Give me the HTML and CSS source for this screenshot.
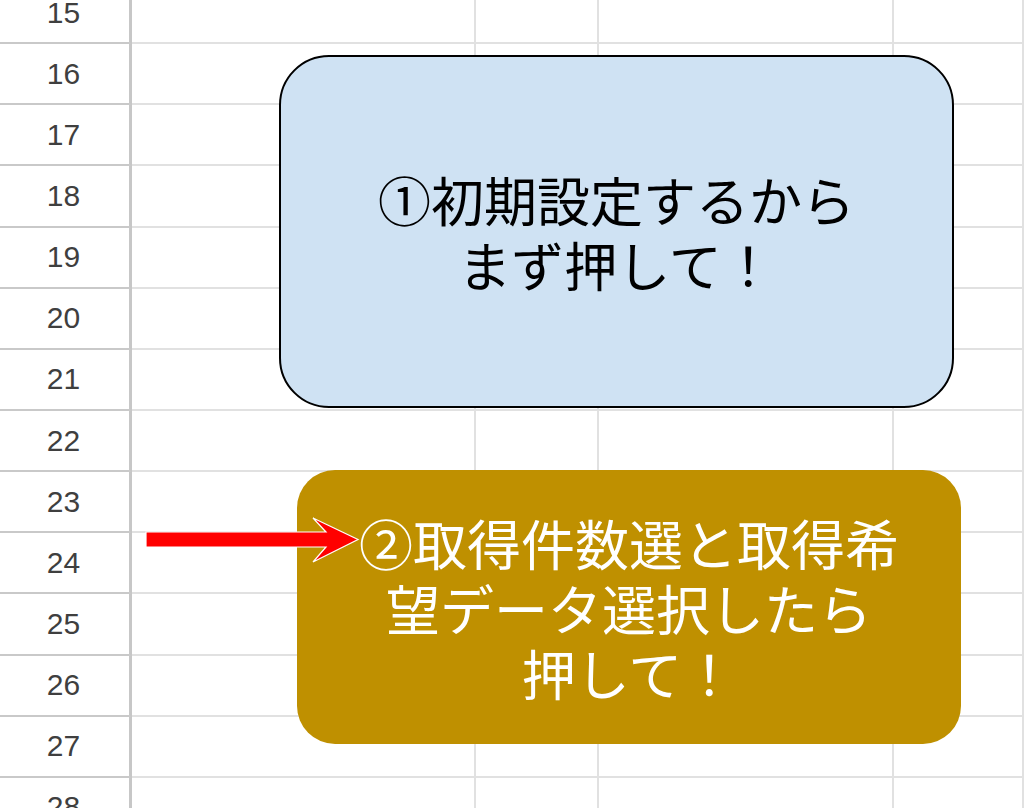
FILE: index.html
```html
<!DOCTYPE html>
<html lang="ja">
<head>
<meta charset="utf-8">
<title>シート</title>
<link rel="stylesheet" href="styles.css">
</head>
<body>
<div class="sheet">
  <div class="row"><div class="rh">15</div><div class="c c1"></div><div class="c c2"></div><div class="c c3"></div><div class="c c4"></div></div>
  <div class="row"><div class="rh">16</div><div class="c c1"></div><div class="c c2"></div><div class="c c3"></div><div class="c c4"></div></div>
  <div class="row"><div class="rh">17</div><div class="c c1"></div><div class="c c2"></div><div class="c c3"></div><div class="c c4"></div></div>
  <div class="row"><div class="rh">18</div><div class="c c1"></div><div class="c c2"></div><div class="c c3"></div><div class="c c4"></div></div>
  <div class="row"><div class="rh">19</div><div class="c c1"></div><div class="c c2"></div><div class="c c3"></div><div class="c c4"></div></div>
  <div class="row"><div class="rh">20</div><div class="c c1"></div><div class="c c2"></div><div class="c c3"></div><div class="c c4"></div></div>
  <div class="row"><div class="rh">21</div><div class="c c1"></div><div class="c c2"></div><div class="c c3"></div><div class="c c4"></div></div>
  <div class="row"><div class="rh">22</div><div class="c c1"></div><div class="c c2"></div><div class="c c3"></div><div class="c c4"></div></div>
  <div class="row"><div class="rh">23</div><div class="c c1"></div><div class="c c2"></div><div class="c c3"></div><div class="c c4"></div></div>
  <div class="row"><div class="rh">24</div><div class="c c1"></div><div class="c c2"></div><div class="c c3"></div><div class="c c4"></div></div>
  <div class="row"><div class="rh">25</div><div class="c c1"></div><div class="c c2"></div><div class="c c3"></div><div class="c c4"></div></div>
  <div class="row"><div class="rh">26</div><div class="c c1"></div><div class="c c2"></div><div class="c c3"></div><div class="c c4"></div></div>
  <div class="row"><div class="rh">27</div><div class="c c1"></div><div class="c c2"></div><div class="c c3"></div><div class="c c4"></div></div>
  <div class="row"><div class="rh">28</div><div class="c c1"></div><div class="c c2"></div><div class="c c3"></div><div class="c c4"></div></div>

  <!-- drawings placed on the sheet -->
  <div class="shape shape-setup">
    <p>①初期設定するから<br>まず押して！</p>
  </div>
  <div class="shape shape-fetch">
    <p>②取得件数選と取得希<br>望データ選択したら<br>押して！</p>
  </div>
  <svg class="arrow" width="220" height="50" viewBox="0 0 220 50">
    <polygon points="1,17 181,17 168,3 213,24.5 168,47 181,32 1,32" fill="#ff0000" stroke="#ffffff" stroke-width="1.2" stroke-linejoin="miter"/>
  </svg>
</div>
</body>
</html>
```

FILE: styles.css
```css
html, body {
  margin: 0;
  padding: 0;
  background: #ffffff;
  overflow: hidden;
}

.sheet {
  position: relative;
  width: 1024px;
  height: 808px;
  overflow: hidden;
}

.row {
  display: flex;
  height: 61.15px;
}

.row:first-child {
  margin-top: -17px;
}

.rh {
  box-sizing: border-box;
  width: 132px;
  flex: none;
  border-right: 3px solid #c7c7c7;
  border-bottom: 2px solid #c9c9c9;
  display: flex;
  align-items: center;
  justify-content: center;
  padding-right: 2px;
  font-family: "Liberation Sans", Arial, sans-serif;
  font-size: 30px;
  color: #3f3f3f;
}

.c {
  box-sizing: border-box;
  flex: none;
  border-right: 2px solid #e1e1e1;
  border-bottom: 2px solid #e1e1e1;
}

.c1 { width: 344px; }
.c2 { width: 123px; }
.c3 { width: 295px; }
.c4 { flex: 1; }

.shape {
  position: absolute;
  box-sizing: border-box;
  display: flex;
  align-items: center;
  justify-content: center;
  text-align: center;
  font-family: "Noto Sans CJK JP", "Noto Sans", sans-serif;
  font-size: 53px;
  line-height: 65px;
}

.shape p {
  margin: 0;
  white-space: nowrap;
}

.shape-setup {
  left: 279px;
  top: 55px;
  width: 675px;
  height: 353px;
  background: #cfe2f3;
  border: 2.5px solid #000000;
  border-radius: 50px;
  color: #000000;
}

.shape-fetch {
  left: 297px;
  top: 470px;
  width: 664px;
  height: 274px;
  background: #bf9000;
  border-radius: 38px;
  color: #ffffff;
  font-size: 54px;
}

.arrow {
  position: absolute;
  left: 145px;
  top: 515px;
  overflow: visible;
}
```
